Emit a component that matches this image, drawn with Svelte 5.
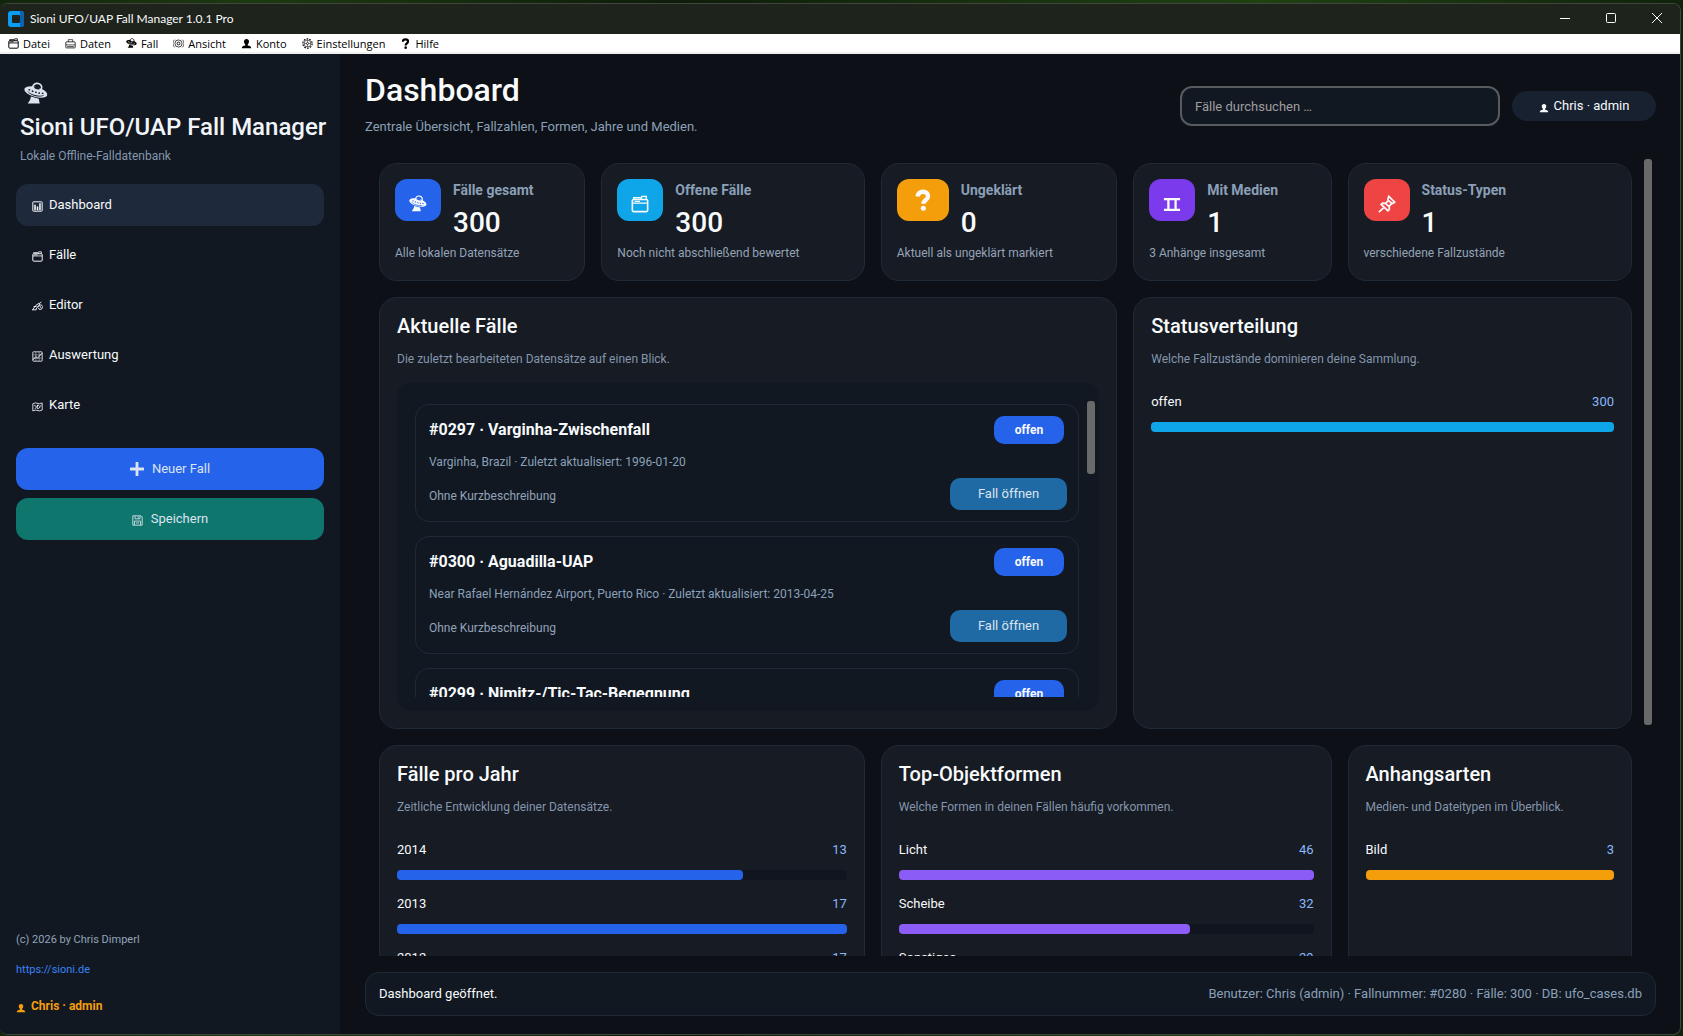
<script>
  const menu = [
    { icon: "files", label: "Datei" },
    { icon: "case", label: "Daten" },
    { icon: "ufo", label: "Fall" },
    { icon: "eye", label: "Ansicht" },
    { icon: "user", label: "Konto" },
    { icon: "gear", label: "Einstellungen" },
    { icon: "question", label: "Hilfe" }
  ];

  const nav = [
    { icon: "chart", label: "Dashboard" },
    { icon: "files", label: "Fälle" },
    { icon: "write", label: "Editor" },
    { icon: "trend", label: "Auswertung" },
    { icon: "map", label: "Karte" }
  ];

  const stats = [
    { icon: "ufo", color: "blue", title: "Fälle gesamt", value: 300, text: "Alle lokalen Datensätze" },
    { icon: "files", color: "cyan", title: "Offene Fälle", value: 300, text: "Noch nicht abschließend bewertet" },
    { icon: "question", color: "amber", title: "Ungeklärt", value: 0, text: "Aktuell als ungeklärt markiert" },
    { icon: "film", color: "violet", title: "Mit Medien", value: 1, text: "3 Anhänge insgesamt" },
    { icon: "pin", color: "red", title: "Status-Typen", value: 1, text: "verschiedene Fallzustände" }
  ];

  const cases = [
    { id: "#0297", name: "Varginha-Zwischenfall", place: "Varginha, Brazil", date: "1996-01-20" },
    { id: "#0300", name: "Aguadilla-UAP", place: "Near Rafael Hernández Airport, Puerto Rico", date: "2013-04-25" },
    { id: "#0299", name: "Nimitz-/Tic-Tac-Begegnung" }
  ];

  const states = [{ label: "offen", value: 300 }];
  const years = [
    { label: "2014", value: 13 },
    { label: "2013", value: 17 },
    { label: "2012", value: 17 }
  ];
  const shapes = [
    { label: "Licht", value: 46 },
    { label: "Scheibe", value: 32 },
    { label: "Sonstiges", value: 29 }
  ];
  const files = [{ label: "Bild", value: 3 }];

  let active = $state("Dashboard");
  let search = $state("");

  // the rounded cap is always visible, the rest grows with the value
  function barWidth(value, rows) {
    const max = Math.max(...rows.map(r => r.value));
    return `calc(8px + (100% - 8px) * ${value / max})`;
  }
</script>

{#snippet icon(name)}
  <svg class="icon {name}" viewBox="0 0 20 20" fill="none" stroke="currentColor" stroke-width="1.8" aria-hidden="true">
    {#if name === "ufo"}
      <g transform="translate(0 1) scale(.77)">
        <g transform="rotate(15 12.8 9.5)">
          <path d="M8 5.500C8 2 10 0 13 0s5 2 5 5.500" stroke-width="1.700" />
          <path
            fill="currentColor"
            stroke="none"
            fill-rule="evenodd"
            d="M0 9.500a12.800 5.400 0 1 0 25.600 0a12.800 5.400 0 1 0-25.600 0z
               M3 10.300c2.500 1.900 6 2.700 9.800 2.700s7.300-.8 9.800-2.700c-2 2.500-5.500 3.600-9.800 3.600s-7.800-1.100-9.800-3.600z
               M4.500 8.300h1.800v1.500H4.500zM8.300 8.900h1.800v1.500H8.300zM12 9.100h1.800v1.500H12zM15.700 8.900h1.800v1.500h-1.800zM19.400 8.300h1.800v1.500h-1.800z
               M9.500 5.300c1.500-1.600 5.500-1.600 7 0c-1.500 1.300-5.500 1.300-7 0z" />
        </g>
        <path d="M7.500 14.500l8.500 2.300 1 5.200H4l2.700-4z" fill="currentColor" stroke="none" />
      </g>
    {:else if name === "files"}
      <rect x="1.500" y="5" width="17" height="13.500" rx="1.500" />
      <path d="M1.500 9h17M3 5V3h8l1 2M12 3V1.500h5V5M4 7h6" stroke-width="1.500" />
    {:else if name === "case"}
      <rect x="1.500" y="7" width="17" height="11" rx="1" stroke-width="1.400" />
      <path d="M6 7V3h8v4M1.500 12.500h17M4 15.500h12" stroke-width="1.200" />
    {:else if name === "eye"}
      <circle cx="10" cy="10" r="6.500" stroke-width="1.300" />
      <circle cx="10" cy="10" r="2.600" stroke-width="1.600" />
      <path d="M3 3C-1 7-1 13 3 17M17 3c4 4 4 10 0 14" stroke-width="1.300" />
    {:else if name === "user"}
      <path d="M10 2c3 0 4.500 2 4.500 4.500 0 2.300-.8 4-2.300 5.200v2c3.800.6 6.300 1.800 6.300 4.800H1.500c0-3 2.500-4.200 6.300-4.800v-2C6.300 10.500 5.500 8.800 5.500 6.500 5.500 4 7 2 10 2z" fill="currentColor" stroke="none" />
    {:else if name === "gear"}
      <circle cx="10" cy="10" r="8.500" stroke-width="2" stroke-dasharray="3.200 2.100" />
      <circle cx="10" cy="10" r="6.300" stroke-width="1.100" />
      <circle cx="10" cy="10" r="2" stroke-width="1.200" />
      <path d="M10 4v4M10 12v4M4 10h4M12 10h4" stroke-width=".9" />
    {:else if name === "question"}
      <path d="M5.300 6.800C5.300 4 7.200 2.500 10 2.500s4.600 1.500 4.600 4c0 3.600-4.300 3.200-4.300 7" stroke-width="4" />
      <circle cx="10.300" cy="17.500" r="2.300" fill="currentColor" stroke="none" />
    {:else if name === "chart"}
      <rect x="1.500" y="1.500" width="17" height="17" rx="1" />
      <path d="M5.500 17V7M10 17v-7M14.500 17V4" stroke-width="2.800" />
    {:else if name === "write"}
      <path d="M0 16h8M1 16l6-8 6-4 1.500 1.500L9 12l-2 4M11 11c2-4 6-5 8-2s-1 7-6 6l-2-3M14 4l3-2M3 10h5M14 9l3 4" stroke-width="1.700" />
    {:else if name === "trend"}
      <rect x="1.500" y="1.500" width="17" height="17" rx="1" stroke-width="1.500" />
      <path d="M2 16l5-6 3 3 8-9" stroke-width="1.700" />
      <path d="M2 7h16M2 13h16M7 2v16M13 2v16" stroke-width=".8" />
    {:else if name === "map"}
      <path d="M1.500 5l5-1.500 7 1.500 5-1.500v13l-5 1.500-7-1.500-5 1.500z" stroke-width="1.500" />
      <path d="M4 8l4 2 3-3 3 3 3-2M5 14l3-2 3 2 4-3M10 7v5" stroke-width="1.500" />
    {:else if name === "film"}
      <path d="M1 4.500h18M1 16.500h18" stroke-width="2.600" />
      <path d="M6 5v11M14 5v11" stroke-width="2.600" />
    {:else if name === "pin"}
      <path d="M12 1.500l6.500 6.500-2 1.500-1-.5-3 3.500 0 3.500-1.500 1.500L3.500 10.500 5 9l3.500.2 3-3.200-.5-1.500zM7 13.500L1 19M8.500 9.500l3.500 3M11.500 6l3.500 3" stroke-width="1.900" />
    {:else if name === "save"}
      <path d="M1.500 1.500h15l2 2v15h-17z" stroke-width="1.600" />
      <path d="M5.500 2v5h9V2M4.500 18v-7h11v7M7 14.500h6M11.500 3v3" stroke-width="1.500" />
    {:else if name === "plus"}
      <path d="M10 1v18M1 10h18" stroke-width="4" stroke-linecap="round" />
    {/if}
  </svg>
{/snippet}

{#snippet bars(rows, color)}
  <ul class="bars">
    {#each rows as row}
      <li>
        <div class="bar-label"><span>{row.label}</span><span class="count">{row.value}</span></div>
        <div class="track"><div class="fill {color}" style="width: {barWidth(row.value, rows)}"></div></div>
      </li>
    {/each}
  </ul>
{/snippet}

<div class="desktop">
  <div class="window">
    <header class="titlebar">
      <svg class="app-logo" viewBox="0 0 16 16" aria-hidden="true">
        <rect width="16" height="16" rx="3" fill="#0a9bf5" />
        <path d="M12 0h1a3 3 0 0 1 3 3v10a3 3 0 0 1-3 3h-1z" fill="#0763b0" />
        <rect x="4" y="4" width="8" height="8" rx="1" fill="#1e231c" />
      </svg>
      <span class="app-name">Sioni UFO/UAP Fall Manager 1.0.1 Pro</span>
      <div class="window-buttons">
        <button aria-label="Minimieren"><svg viewBox="0 0 10 10"><path d="M0 5.500h10" /></svg></button>
        <button aria-label="Maximieren"><svg viewBox="0 0 10 10"><rect x=".5" y=".5" width="9" height="9" rx="1" /></svg></button>
        <button aria-label="Schließen"><svg viewBox="0 0 10 10"><path d="M0 0l10 10M10 0L0 10" /></svg></button>
      </div>
    </header>

    <nav class="menubar">
      {#each menu as item}
        <button>{@render icon(item.icon)}{item.label}</button>
      {/each}
    </nav>

    <div class="body">
      <aside>
        <div class="brand">
          {@render icon("ufo")}
          <h2>Sioni UFO/UAP Fall Manager</h2>
          <p>Lokale Offline-Falldatenbank</p>
        </div>
        <nav class="side-nav">
          {#each nav as item}
            <button class:active={active === item.label} onclick={() => (active = item.label)}>
              {@render icon(item.icon)}{item.label}
            </button>
          {/each}
        </nav>
        <div class="side-nav actions">
          <button class="blue">{@render icon("plus")}Neuer Fall</button>
          <button class="green">{@render icon("save")}Speichern</button>
        </div>
        <footer>
          <p>(c) 2026 by Chris Dimperl</p>
          <a href="https://sioni.de">https://sioni.de</a>
          <strong>{@render icon("user")}Chris · admin</strong>
        </footer>
      </aside>

      <main>
        <header class="page-head">
          <div class="heading">
            <h1>Dashboard</h1>
            <p>Zentrale Übersicht, Fallzahlen, Formen, Jahre und Medien.</p>
          </div>
          <input type="text" aria-label="Fälle durchsuchen" placeholder="Fälle durchsuchen …" bind:value={search} />
          <div class="user-pill">{@render icon("user")}Chris · admin</div>
        </header>

        <div class="scroller">
          <div class="grid">
            {#each stats as stat}
              <section class="card stat">
                <div class="stat-head">
                  <div class="tile {stat.color}">{@render icon(stat.icon)}</div>
                  <div>
                    <h3>{stat.title}</h3>
                    <div class="number">{stat.value}</div>
                  </div>
                </div>
                <p>{stat.text}</p>
              </section>
            {/each}

            <section class="card panel span3">
              <h2>Aktuelle Fälle</h2>
              <p>Die zuletzt bearbeiteten Datensätze auf einen Blick.</p>
              <div class="list">
                <div class="list-view">
                  {#each cases as item}
                    <article>
                      <div class="info">
                        <h3>{item.id} · {item.name}</h3>
                        {#if item.place}
                          <p>{item.place} · Zuletzt aktualisiert: {item.date}</p>
                          <p class="summary">Ohne Kurzbeschreibung</p>
                        {/if}
                      </div>
                      <div class="side">
                        <span class="badge">offen</span>
                        {#if item.place}
                          <button>Fall öffnen</button>
                        {/if}
                      </div>
                    </article>
                  {/each}
                </div>
                <div class="thumb"></div>
              </div>
            </section>

            <section class="card panel span2">
              <h2>Statusverteilung</h2>
              <p>Welche Fallzustände dominieren deine Sammlung.</p>
              {@render bars(states, "cyan")}
            </section>

            <section class="card panel span2">
              <h2>Fälle pro Jahr</h2>
              <p>Zeitliche Entwicklung deiner Datensätze.</p>
              {@render bars(years, "blue")}
            </section>

            <section class="card panel span2">
              <h2>Top-Objektformen</h2>
              <p>Welche Formen in deinen Fällen häufig vorkommen.</p>
              {@render bars(shapes, "lilac")}
            </section>

            <section class="card panel">
              <h2>Anhangsarten</h2>
              <p>Medien- und Dateitypen im Überblick.</p>
              {@render bars(files, "amber")}
            </section>
          </div>
          <div class="thumb"></div>
        </div>

        <footer class="statusbar">
          <span>Dashboard geöffnet.</span>
          <span class="meta">Benutzer: Chris (admin) · Fallnummer: #0280 · Fälle: 300 · DB: ufo_cases.db</span>
        </footer>
      </main>
    </div>
  </div>
</div>

<style>
  :global(body) {
    background: #0d1117;
  }
  * {
    box-sizing: border-box;
  }
  h1, h2, h3, p, ul {
    margin: 0;
    padding: 0;
  }
  button, input {
    font: inherit;
    color: inherit;
    border: 0;
    background: none;
  }
  .desktop {
    height: 100vh;
    padding: 3px 2px 1px 0;
    background: linear-gradient(90deg, #12250c, #1c3a10 15%, #0e1d0a 40%, #1f4212 75%, #10220b);
    font-family: Roboto, "Liberation Sans", sans-serif;
    font-size: 13px;
    line-height: 20px;
    color: #f8fafc;
  }
  .window {
    display: flex;
    flex-direction: column;
    height: 100%;
    overflow: hidden;
    border: 1px solid #40463e;
    border-left: 0;
    border-radius: 8px;
    background: #0d1117;
  }
  .icon {
    width: 11px;
    height: 11px;
    flex: none;
  }

  .titlebar {
    display: flex;
    align-items: center;
    flex: none;
    height: 30px;
    padding-left: 8px;
    background: #1e231c;
    font-family: Lato, "Noto Sans", sans-serif;
    font-size: 12px;
  }
  .app-logo {
    width: 16px;
    height: 16px;
    margin-right: 6px;
  }
  .window-buttons {
    display: flex;
    margin-left: auto;
  }
  .window-buttons button {
    width: 46px;
    height: 29px;
    padding: 0;
  }
  .window-buttons svg {
    width: 10px;
    height: 10px;
    overflow: visible;
    fill: none;
    stroke: #fff;
  }
  .menubar {
    display: flex;
    flex: none;
    gap: 15px;
    height: 20px;
    padding: 1px 8px 0;
    border-bottom: 2px solid #f0f0f0;
    background: #fff;
    color: #000;
    font-family: "Open Sans", "Noto Sans", sans-serif;
    font-size: 11px;
  }
  .menubar button {
    display: flex;
    align-items: center;
    gap: 4px;
    padding: 0;
  }

  .body {
    display: flex;
    flex: 1;
    min-height: 0;
  }
  aside {
    display: flex;
    flex-direction: column;
    flex: none;
    width: 340px;
    padding: 28px 16px 18px;
    background: #111822;
  }
  .brand {
    padding-left: 4px;
    color: #f1f5f9;
  }
  .brand .icon {
    display: block;
    width: 26px;
    height: 24px;
    margin-left: 3px;
    color: #dbe4ee;
  }
  .brand h2 {
    margin-top: 7px;
    font-size: 24px;
    line-height: 28px;
    font-weight: 500;
    white-space: nowrap;
  }
  .brand p {
    margin-top: 5px;
    font-size: 12px;
    color: #8496ad;
  }
  .side-nav {
    display: flex;
    flex-direction: column;
    gap: 8px;
    margin-top: 18px;
  }
  .side-nav button {
    display: flex;
    align-items: center;
    gap: 6px;
    height: 42px;
    padding: 0 16px;
    border-radius: 12px;
  }
  .side-nav .icon {
    margin-top: 3px;
  }
  .side-nav .active {
    background: #1e293b;
  }
  .actions {
    margin-top: 22px;
  }
  .actions button {
    justify-content: center;
    gap: 8px;
    color: #dce4ee;
  }
  .actions .plus {
    width: 14px;
    height: 14px;
    margin-top: 0;
  }
  aside footer {
    display: flex;
    flex-direction: column;
    gap: 10px;
    margin-top: auto;
    font-size: 11px;
    color: #94a3b8;
  }
  aside a {
    color: #3b82f6;
    text-decoration: none;
  }
  aside strong {
    display: flex;
    align-items: center;
    gap: 5px;
    margin-top: 6px;
    font-size: 12px;
    color: #f59e0b;
  }

  main {
    display: flex;
    flex-direction: column;
    flex: 1;
    min-width: 0;
    padding: 16px 24px 18px 25px;
  }
  .page-head {
    display: flex;
    align-items: center;
    flex: none;
    gap: 12px;
    min-height: 72px;
  }
  .heading {
    align-self: flex-start;
    flex: 1;
  }
  h1 {
    font-size: 32px;
    line-height: 40px;
    font-weight: 500;
  }
  .heading p {
    margin-top: 7px;
    color: #8ba0b8;
  }
  .page-head input {
    width: 320px;
    height: 40px;
    padding: 0 13px;
    border: 2px solid #565b5e;
    border-radius: 12px;
    background: #111822;
    outline: 0;
  }
  .page-head input::placeholder {
    color: #9e9e9e;
    opacity: 1;
  }
  .user-pill {
    display: flex;
    align-items: center;
    justify-content: center;
    gap: 5px;
    min-width: 144px;
    height: 30px;
    border-radius: 15px;
    background: #182130;
  }
  .user-pill .icon, strong .icon {
    width: 10px;
    height: 10px;
    margin-top: 3px;
  }

  .scroller {
    position: relative;
    flex: 1;
    min-height: 0;
    margin-top: 17px;
    padding: 4px 24px 0 14px;
    overflow: hidden;
  }
  .thumb {
    position: absolute;
    top: 0;
    right: 4px;
    width: 8px;
    height: 71%;
    border-radius: 3px;
    background: #696969;
  }
  .grid {
    display: grid;
    grid-template-columns: 206fr 263fr 236fr 198fr 284fr;
    gap: 16px;
  }
  .card {
    min-width: 0;
    border: 1px solid #202a37;
    border-radius: 18px;
    background: #171b23;
  }
  .span2 {
    grid-column: span 2;
  }
  .span3 {
    grid-column: span 3;
  }
  .stat {
    padding: 15px 15px 18px;
  }
  .stat-head {
    display: flex;
    gap: 12px;
  }
  .tile {
    display: flex;
    align-items: center;
    justify-content: center;
    min-width: 46px;
    height: 42px;
    padding: 0 14px;
    border-radius: 12px;
  }
  .tile .icon {
    width: 18px;
    height: 18px;
    margin-top: 7px;
  }
  .tile .question {
    width: 24px;
    height: 22px;
    margin-top: 0;
  }
  .stat h3 {
    font-size: 14px;
    line-height: 22px;
    font-weight: 700;
    color: #8ba0b8;
  }
  .number {
    margin-top: 2px;
    font-size: 28px;
    line-height: 40px;
    font-weight: 500;
  }
  .stat p {
    margin-top: 1px;
    font-size: 12px;
    line-height: 18px;
    color: #94a3b8;
  }
  .panel {
    padding: 15px 17px 17px;
  }
  .panel h2 {
    font-size: 20px;
    line-height: 26px;
    font-weight: 500;
  }
  .panel > p {
    margin-top: 11px;
    font-size: 12px;
    line-height: 18px;
    color: #8496ad;
  }
  .blue { background: #2563eb; }
  .cyan { background: #0ea5e9; }
  .amber { background: #f59e0b; }
  .violet { background: #7c3aed; }
  .lilac { background: #8b5cf6; }
  .red { background: #ef4444; }
  .green { background: #0f766e; }

  .list {
    position: relative;
    margin-top: 15px;
    padding: 18px 20px 14px 18px;
    border-radius: 14px;
    background: #111822;
  }
  .list-view {
    display: flex;
    flex-direction: column;
    gap: 14px;
    height: 296px;
    padding-top: 3px;
    overflow: hidden;
  }
  .list .thumb {
    top: 18px;
    height: 73px;
  }
  article {
    display: flex;
    flex: none;
    justify-content: space-between;
    min-height: 118px;
    padding: 11px 11px 11px 13px;
    border: 1px solid #202a37;
    border-radius: 14px;
  }
  .info {
    padding-top: 3px;
    font-size: 12px;
    line-height: 18px;
    color: #8ba0b8;
  }
  .info h3 {
    margin-bottom: 12px;
    font-size: 16px;
    line-height: 22px;
    color: #f8fafc;
  }
  .info .summary {
    margin-top: 16px;
    color: #94a3b8;
  }
  .side {
    display: flex;
    flex-direction: column;
    justify-content: space-between;
    align-items: flex-end;
  }
  .badge {
    margin-right: 3px;
    padding: 0 21px;
    border-radius: 10px;
    background: #2563eb;
    font-size: 12px;
    line-height: 28px;
    font-weight: 700;
  }
  .side button {
    height: 32px;
    padding: 0 28px;
    border-radius: 10px;
    background: #1f6aa5;
    color: #dce4ee;
  }

  .bars {
    display: flex;
    flex-direction: column;
    gap: 14px;
    margin-top: 24px;
    list-style: none;
  }
  .bar-label {
    display: flex;
    justify-content: space-between;
  }
  .count {
    color: #8ab8fb;
  }
  .track {
    height: 10px;
    margin-top: 10px;
    border-radius: 4px;
    background: #10151f;
  }
  .fill {
    height: 100%;
    border-radius: 4px;
  }

  .statusbar {
    display: flex;
    align-items: center;
    justify-content: space-between;
    flex: none;
    height: 44px;
    margin-top: 16px;
    padding: 0 13px;
    border: 1px solid #202a37;
    border-radius: 14px;
    background: #111822;
  }
  .meta {
    color: #8ba0b8;
  }
</style>
